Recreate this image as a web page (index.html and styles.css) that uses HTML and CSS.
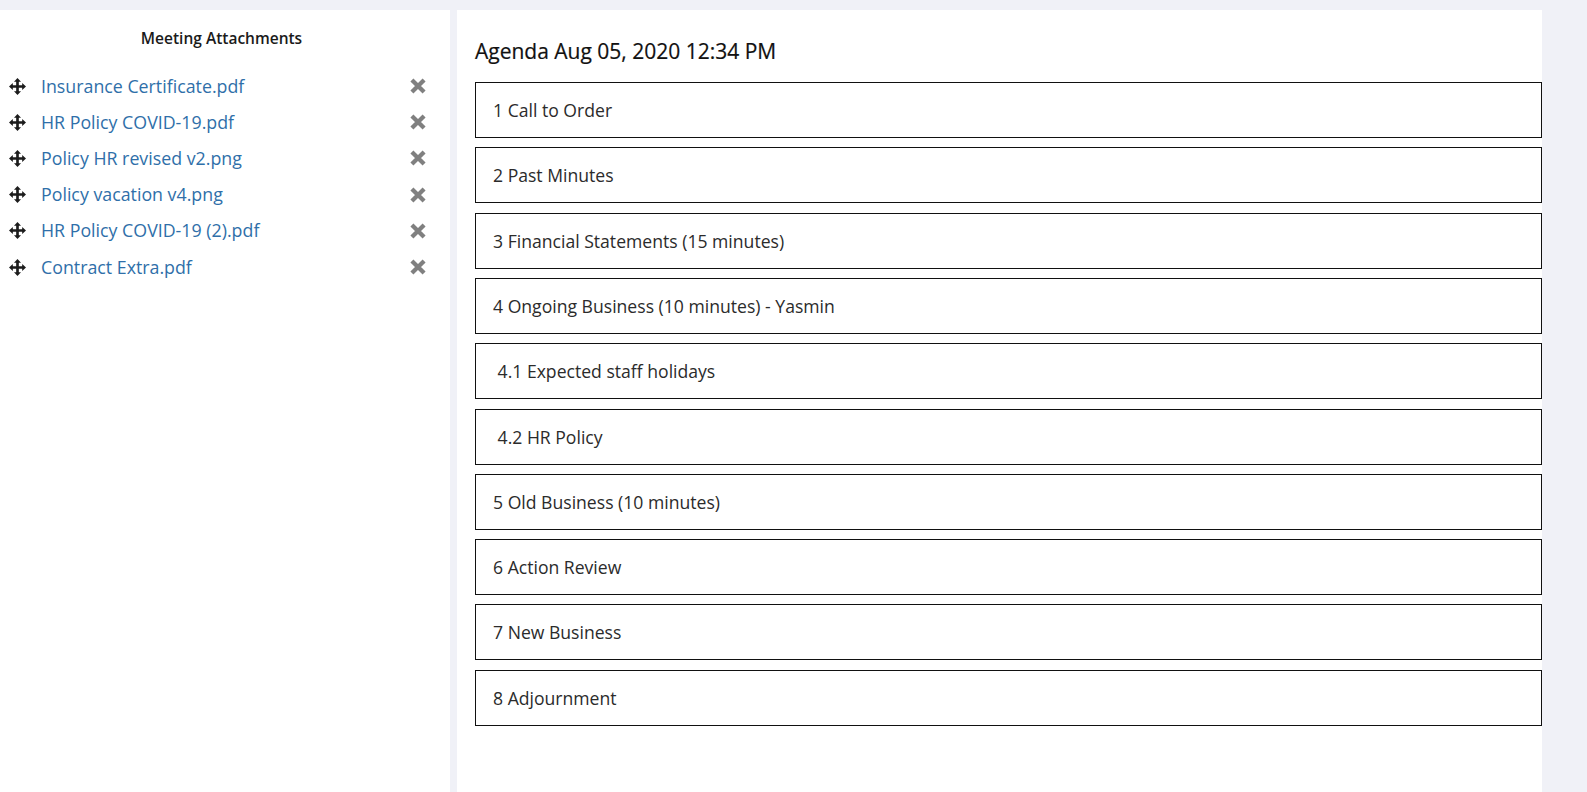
FILE: index.html
```html
<!DOCTYPE html>
<html lang="en">
<head>
<meta charset="utf-8">
<title>Meeting Agenda</title>
<link rel="stylesheet" href="styles.css">
</head>
<body>
<div class="page">
  <aside class="attachments">
    <h3 class="attachments-title">Meeting Attachments</h3>
    <ul class="file-list">
      <li class="file-row">
        <span class="move-icon"><svg viewBox="0 0 16 16" width="17" height="17"><path d="M8 0 L11.3 3.6 H9.25 V6.75 H12.4 V4.7 L16 8 L12.4 11.3 V9.25 H9.25 V12.4 H11.3 L8 16 L4.7 12.4 H6.75 V9.25 H3.6 V11.3 L0 8 L3.6 4.7 V6.75 H6.75 V3.6 H4.7 Z" fill="#1c1c1c"/></svg></span>
        <a class="file-link" href="#">Insurance Certificate.pdf</a>
        <span class="remove-icon"><svg viewBox="0 0 16 16" width="18" height="18"><path d="M2.6 2.6 L13.4 13.4 M13.4 2.6 L2.6 13.4" stroke="#808080" stroke-width="3.8"/></svg></span>
      </li>
      <li class="file-row">
        <span class="move-icon"><svg viewBox="0 0 16 16" width="17" height="17"><path d="M8 0 L11.3 3.6 H9.25 V6.75 H12.4 V4.7 L16 8 L12.4 11.3 V9.25 H9.25 V12.4 H11.3 L8 16 L4.7 12.4 H6.75 V9.25 H3.6 V11.3 L0 8 L3.6 4.7 V6.75 H6.75 V3.6 H4.7 Z" fill="#1c1c1c"/></svg></span>
        <a class="file-link" href="#">HR Policy COVID-19.pdf</a>
        <span class="remove-icon"><svg viewBox="0 0 16 16" width="18" height="18"><path d="M2.6 2.6 L13.4 13.4 M13.4 2.6 L2.6 13.4" stroke="#808080" stroke-width="3.8"/></svg></span>
      </li>
      <li class="file-row">
        <span class="move-icon"><svg viewBox="0 0 16 16" width="17" height="17"><path d="M8 0 L11.3 3.6 H9.25 V6.75 H12.4 V4.7 L16 8 L12.4 11.3 V9.25 H9.25 V12.4 H11.3 L8 16 L4.7 12.4 H6.75 V9.25 H3.6 V11.3 L0 8 L3.6 4.7 V6.75 H6.75 V3.6 H4.7 Z" fill="#1c1c1c"/></svg></span>
        <a class="file-link" href="#">Policy HR revised v2.png</a>
        <span class="remove-icon"><svg viewBox="0 0 16 16" width="18" height="18"><path d="M2.6 2.6 L13.4 13.4 M13.4 2.6 L2.6 13.4" stroke="#808080" stroke-width="3.8"/></svg></span>
      </li>
      <li class="file-row">
        <span class="move-icon"><svg viewBox="0 0 16 16" width="17" height="17"><path d="M8 0 L11.3 3.6 H9.25 V6.75 H12.4 V4.7 L16 8 L12.4 11.3 V9.25 H9.25 V12.4 H11.3 L8 16 L4.7 12.4 H6.75 V9.25 H3.6 V11.3 L0 8 L3.6 4.7 V6.75 H6.75 V3.6 H4.7 Z" fill="#1c1c1c"/></svg></span>
        <a class="file-link" href="#">Policy vacation v4.png</a>
        <span class="remove-icon"><svg viewBox="0 0 16 16" width="18" height="18"><path d="M2.6 2.6 L13.4 13.4 M13.4 2.6 L2.6 13.4" stroke="#808080" stroke-width="3.8"/></svg></span>
      </li>
      <li class="file-row">
        <span class="move-icon"><svg viewBox="0 0 16 16" width="17" height="17"><path d="M8 0 L11.3 3.6 H9.25 V6.75 H12.4 V4.7 L16 8 L12.4 11.3 V9.25 H9.25 V12.4 H11.3 L8 16 L4.7 12.4 H6.75 V9.25 H3.6 V11.3 L0 8 L3.6 4.7 V6.75 H6.75 V3.6 H4.7 Z" fill="#1c1c1c"/></svg></span>
        <a class="file-link" href="#">HR Policy COVID-19 (2).pdf</a>
        <span class="remove-icon"><svg viewBox="0 0 16 16" width="18" height="18"><path d="M2.6 2.6 L13.4 13.4 M13.4 2.6 L2.6 13.4" stroke="#808080" stroke-width="3.8"/></svg></span>
      </li>
      <li class="file-row">
        <span class="move-icon"><svg viewBox="0 0 16 16" width="17" height="17"><path d="M8 0 L11.3 3.6 H9.25 V6.75 H12.4 V4.7 L16 8 L12.4 11.3 V9.25 H9.25 V12.4 H11.3 L8 16 L4.7 12.4 H6.75 V9.25 H3.6 V11.3 L0 8 L3.6 4.7 V6.75 H6.75 V3.6 H4.7 Z" fill="#1c1c1c"/></svg></span>
        <a class="file-link" href="#">Contract Extra.pdf</a>
        <span class="remove-icon"><svg viewBox="0 0 16 16" width="18" height="18"><path d="M2.6 2.6 L13.4 13.4 M13.4 2.6 L2.6 13.4" stroke="#808080" stroke-width="3.8"/></svg></span>
      </li>
    </ul>
  </aside>
  <main class="agenda">
    <h2 class="agenda-title">Agenda Aug 05, 2020 12:34 PM</h2>
    <div class="agenda-list">
      <div class="agenda-item">1 Call to Order</div>
      <div class="agenda-item">2 Past Minutes</div>
      <div class="agenda-item">3 Financial Statements (15 minutes)</div>
      <div class="agenda-item">4 Ongoing Business (10 minutes) - Yasmin</div>
      <div class="agenda-item">&nbsp;4.1 Expected staff holidays</div>
      <div class="agenda-item">&nbsp;4.2 HR Policy</div>
      <div class="agenda-item">5 Old Business (10 minutes)</div>
      <div class="agenda-item">6 Action Review</div>
      <div class="agenda-item">7 New Business</div>
      <div class="agenda-item">8 Adjournment</div>
    </div>
  </main>
</div>
</body>
</html>
```
FILE: styles.css
```css
html, body {
  margin: 0;
  padding: 0;
  height: 100%;
}
body {
  background: #f0f1f7;
  font-family: "Open Sans", "Liberation Sans", sans-serif;
  color: #333;
  overflow: hidden;
}
.page {
  display: flex;
  gap: 7px;
  padding-top: 10px;
  height: 782px;
}
.attachments {
  width: 450px;
  flex: none;
  background: #fff;
  padding-top: 18px;
  box-sizing: border-box;
}
.attachments-title {
  margin: 0;
  padding-right: 7px;
  text-align: center;
  font-size: 15.5px;
  font-weight: 600;
  color: #1a1a1a;
  line-height: 21px;
}
.file-list {
  list-style: none;
  margin: 19px 0 0;
  padding: 0;
}
.file-row {
  display: flex;
  align-items: center;
  height: 36.2px;
  padding-left: 9px;
  padding-right: 23px;
}
.move-icon {
  display: flex;
  width: 17px;
  height: 17px;
  flex: none;
}
.file-link {
  margin-left: 15px;
  flex: 1;
  color: #2f6fa9;
  text-decoration: none;
  font-size: 17.8px;
  line-height: 25px;
}
.remove-icon {
  display: flex;
  width: 18px;
  height: 18px;
  flex: none;
}
.agenda {
  width: 1085px;
  flex: none;
  background: #fff;
  padding: 27px 0 0 18px;
  box-sizing: border-box;
}
.agenda-title {
  margin: 0 0 16.5px;
  font-size: 21px;
  font-weight: 400;
  color: #111;
  line-height: 28.6px;
  -webkit-text-stroke: 0.2px #111;
}
.agenda-list {
  display: flex;
  flex-direction: column;
  gap: 9.3px;
}
.agenda-item {
  height: 56px;
  box-sizing: border-box;
  border: 1px solid #111;
  display: flex;
  align-items: center;
  padding-left: 17px;
  font-size: 17.6px;
  color: #2b2b2b;
}
```
